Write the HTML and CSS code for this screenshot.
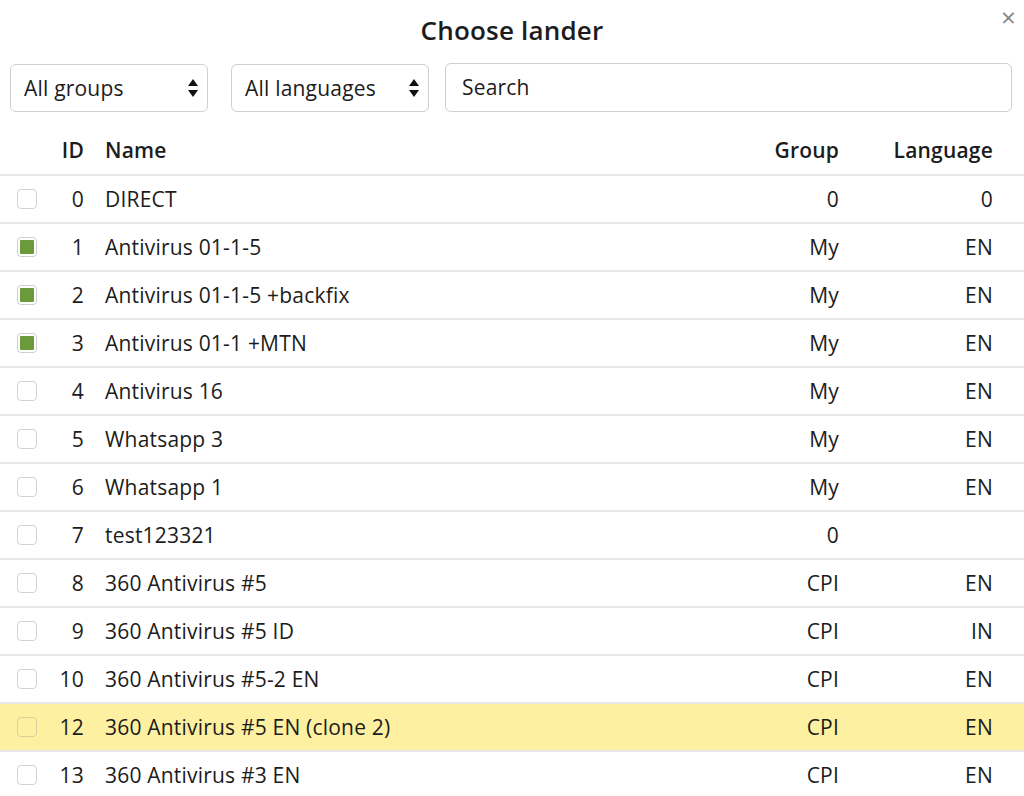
FILE: index.html
```html
<!DOCTYPE html>
<html>
<head>
    <link rel="stylesheet" href="styles.css">
</head>
<body>
    <div class="modal">
        <div class="modal-header">
            <h1>Choose lander</h1>
            <span class="close">&times;</span>
        </div>

        <div class="filters">
            <div class="select">
                <span>All groups</span>
                <svg class="arrows" width="12" height="20" viewBox="0 0 12 20"><path d="M6 1 L11 8 H1 Z M1 12 H11 L6 19 Z" fill="#111"/></svg>
            </div>
            <div class="select">
                <span>All languages</span>
                <svg class="arrows" width="12" height="20" viewBox="0 0 12 20"><path d="M6 1 L11 8 H1 Z M1 12 H11 L6 19 Z" fill="#111"/></svg>
            </div>
            <input type="text" class="search" placeholder="Search">
        </div>

        <table class="landers">
            <thead>
                <tr>
                    <th class="col-check"></th>
                    <th class="col-id">ID</th>
                    <th class="col-name">Name</th>
                    <th class="col-group">Group</th>
                    <th class="col-lang">Language</th>
                </tr>
            </thead>
            <tbody>
                <tr><td class="col-check"><span class="box"></span></td><td class="col-id">0</td><td class="col-name">DIRECT</td><td class="col-group">0</td><td class="col-lang">0</td></tr>
                <tr><td class="col-check"><span class="box checked"></span></td><td class="col-id">1</td><td class="col-name">Antivirus 01-1-5</td><td class="col-group">My</td><td class="col-lang">EN</td></tr>
                <tr><td class="col-check"><span class="box checked"></span></td><td class="col-id">2</td><td class="col-name">Antivirus 01-1-5 +backfix</td><td class="col-group">My</td><td class="col-lang">EN</td></tr>
                <tr><td class="col-check"><span class="box checked"></span></td><td class="col-id">3</td><td class="col-name">Antivirus 01-1 +MTN</td><td class="col-group">My</td><td class="col-lang">EN</td></tr>
                <tr><td class="col-check"><span class="box"></span></td><td class="col-id">4</td><td class="col-name">Antivirus 16</td><td class="col-group">My</td><td class="col-lang">EN</td></tr>
                <tr><td class="col-check"><span class="box"></span></td><td class="col-id">5</td><td class="col-name">Whatsapp 3</td><td class="col-group">My</td><td class="col-lang">EN</td></tr>
                <tr><td class="col-check"><span class="box"></span></td><td class="col-id">6</td><td class="col-name">Whatsapp 1</td><td class="col-group">My</td><td class="col-lang">EN</td></tr>
                <tr><td class="col-check"><span class="box"></span></td><td class="col-id">7</td><td class="col-name">test123321</td><td class="col-group">0</td><td class="col-lang"></td></tr>
                <tr><td class="col-check"><span class="box"></span></td><td class="col-id">8</td><td class="col-name">360 Antivirus #5</td><td class="col-group">CPI</td><td class="col-lang">EN</td></tr>
                <tr><td class="col-check"><span class="box"></span></td><td class="col-id">9</td><td class="col-name">360 Antivirus #5 ID</td><td class="col-group">CPI</td><td class="col-lang">IN</td></tr>
                <tr><td class="col-check"><span class="box"></span></td><td class="col-id">10</td><td class="col-name">360 Antivirus #5-2 EN</td><td class="col-group">CPI</td><td class="col-lang">EN</td></tr>
                <tr class="highlight"><td class="col-check"><span class="box"></span></td><td class="col-id">12</td><td class="col-name">360 Antivirus #5 EN (clone 2)</td><td class="col-group">CPI</td><td class="col-lang">EN</td></tr>
                <tr><td class="col-check"><span class="box"></span></td><td class="col-id">13</td><td class="col-name">360 Antivirus #3 EN</td><td class="col-group">CPI</td><td class="col-lang">EN</td></tr>
            </tbody>
        </table>
    </div>
</body>
</html>
```

FILE: styles.css
```css
body {
    font-family: 'Open Sans', 'DejaVu Sans', sans-serif;
    margin: 0;
    background-color: #ffffff;
    color: #1c1c1c;
    letter-spacing: 0.2px;
    overflow: hidden;
}

.modal {
    width: 1024px;
}

.modal-header {
    position: relative;
    height: 62px;
    display: flex;
    justify-content: center;
    align-items: center;
}

.modal-header h1 {
    margin: 0;
    font-size: 26px;
    font-weight: 600;
    padding-bottom: 2px;
}

.close {
    position: absolute;
    top: 3px;
    right: 8px;
    font-size: 26px;
    color: #858585;
    line-height: 28px;
}

.filters {
    display: flex;
    align-items: center;
    padding: 0 12px 0 10px;
    height: 50px;
}

.select {
    width: 198px;
    height: 48px;
    box-sizing: border-box;
    border: 1px solid #cfcfcf;
    border-radius: 6px;
    display: flex;
    align-items: center;
    justify-content: space-between;
    padding: 0 8px 0 13px;
    font-size: 21px;
    margin-right: 23px;
    margin-top: 2px;
}

.select + .select {
    margin-right: 16px;
}

.arrows {
    display: block;
}

.search {
    flex: 1;
    height: 49px;
    box-sizing: border-box;
    border: 1px solid #cfcfcf;
    border-radius: 6px;
    padding: 0 16px;
    font-family: inherit;
    font-size: 21px;
    letter-spacing: 0.2px;
    color: #1c1c1c;
    outline: none;
}

.search::placeholder {
    color: #1c1c1c;
}

.landers {
    width: 100%;
    border-collapse: collapse;
    margin-top: 15px;
    font-size: 21px;
}

.landers th,
.landers td {
    height: 46px;
    padding: 0;
    border-bottom: 2px solid #e8e8e8;
    white-space: nowrap;
}

.landers th {
    font-weight: 600;
    padding-bottom: 1px;
}

.landers tbody tr:last-child td {
    border-bottom: none;
}

.col-check {
    width: 38px;
    padding-left: 17px !important;
    text-align: left;
}

.col-id {
    width: 29px;
    text-align: right;
}

.col-name {
    text-align: left;
    padding-left: 21px !important;
}

.col-group {
    text-align: right;
}

.col-lang {
    width: 154px;
    text-align: right;
    padding-right: 31px !important;
}

.box {
    display: block;
    width: 20px;
    height: 20px;
    box-sizing: border-box;
    border: 1px solid #d2d2d2;
    border-radius: 4px;
    background-color: #ffffff;
}

.box.checked {
    padding: 2px;
    background-clip: content-box;
    background-color: #6b9a3a;
    border-color: #cfcfcf;
}

.highlight td {
    background-color: #fdf0a0;
}

.highlight .box {
    background-color: #fdf0a0;
    border-color: #d8d0a0;
}
```
